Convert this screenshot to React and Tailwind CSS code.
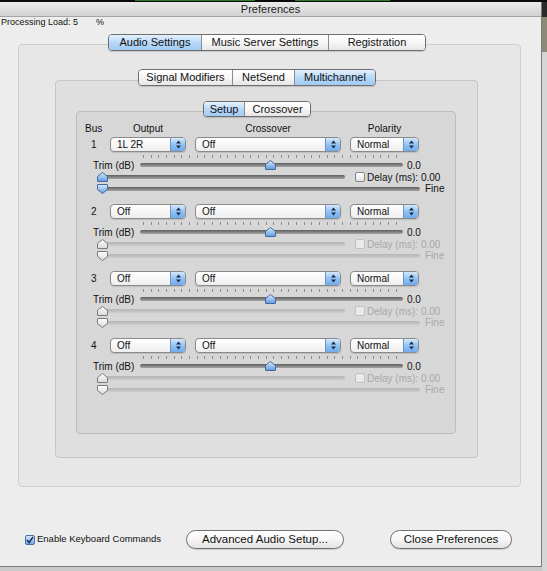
import React from 'react';

const TICKS = Array.from({ length: 34 });

function Segmented({ items, h }) {
    return (
        <div className={`flex w-fit ${h} rounded-[4px] border border-[#6e6e6e] overflow-hidden shadow-[0_1px_1px_rgba(0,0,0,0.15)] relative z-10`}>
            {items.map((it, i) => (
                <div
                    key={it.label}
                    className={`${it.w} flex items-center justify-center text-[11px] text-[#111] ${i > 0 ? 'border-l border-[#8c8c8c]' : ''} ${it.on ? 'bg-linear-to-b from-[#e4f1fd] via-[#b9d9f8] to-[#9fcbf3]' : 'bg-linear-to-b from-white via-[#f7f7f7] to-[#e6e6e6]'}`}
                >
                    {it.label}
                </div>
            ))}
        </div>
    );
}

function Arrows() {
    return (
        <svg width="7" height="9" viewBox="0 0 7 9">
            <path d="M3.5 0.5 L6 3.5 L1 3.5 Z" fill="#1c2b48" />
            <path d="M3.5 8.5 L6 5.5 L1 5.5 Z" fill="#1c2b48" />
        </svg>
    );
}

function Popup({ label, w }) {
    return (
        <div className={`flex h-[15px] ${w} rounded-[4px] border border-[#8a8a8a] overflow-hidden bg-linear-to-b from-white to-[#eeeeee] shadow-[0_1px_1px_rgba(0,0,0,0.12)]`}>
            <div className="flex-1 pl-[6px] text-[10px] leading-[13px] text-[#111]">{label}</div>
            <div className="w-[15px] flex items-center justify-center border-l border-[#6f93c6] bg-linear-to-b from-[#d6e9fc] via-[#93c3f2] to-[#6fabed]">
                <Arrows />
            </div>
        </div>
    );
}

function Thumb({ down, blue, pos }) {
    const fill = blue ? 'url(#thumbBlue)' : 'url(#thumbWhite)';
    const stroke = blue ? '#46679a' : '#7a7a7a';
    return (
        <svg width="11" height="10" viewBox="0 0 11 10" className={`absolute top-1/2 -translate-y-1/2 ${pos}`}>
            {down ? (
                <path d="M1 0.5 L10 0.5 Q10.5 0.5 10.5 1 L10.5 5.5 L5.5 9.5 L0.5 5.5 L0.5 1 Q0.5 0.5 1 0.5 Z" fill={fill} stroke={stroke} />
            ) : (
                <path d="M5.5 0.5 L10.5 4.5 L10.5 9 Q10.5 9.5 10 9.5 L1 9.5 Q0.5 9.5 0.5 9 L0.5 4.5 Z" fill={fill} stroke={stroke} />
            )}
        </svg>
    );
}

function Track({ cls, dim, children }) {
    return (
        <div className={`relative h-[4px] rounded-full ${cls} ${dim ? 'bg-linear-to-b from-[#b4b4b4] to-[#cdcdcd]' : 'bg-linear-to-b from-[#5f5f5f] to-[#a5a5a5]'}`}>
            {children}
        </div>
    );
}

function Check({ on, dim }) {
    return (
        <div className={`w-[10px] h-[10px] rounded-[2px] border flex items-center justify-center ${on ? 'border-[#4b6d9f] bg-linear-to-b from-[#d4e8fc] to-[#6ea9ec]' : dim ? 'border-[#c0c0c0] bg-[#eaeaea]' : 'border-[#858585] bg-linear-to-b from-white to-[#e2e2e2]'}`}>
            {on && (
                <svg width="8" height="8" viewBox="0 0 8 8">
                    <path d="M1 4 L3.2 6.5 L7 0.8" fill="none" stroke="#1a2a4a" strokeWidth="1.4" />
                </svg>
            )}
        </div>
    );
}

function Block({ n, output, first }) {
    const dim = !first;
    return (
        <div className="h-[67px] flex flex-col">
            <div className="flex items-center h-[15px]">
                <div className="w-[33px] pl-[14px] text-[10px] text-[#111]">{n}</div>
                <Popup w="w-[76px]" label={output} />
                <div className="w-[9px]" />
                <Popup w="w-[146px]" label="Off" />
                <div className="w-[9px]" />
                <Popup w="w-[69px]" label="Normal" />
            </div>
            <div className="mt-[3px] ml-[66px] w-[254px] h-[4px] flex justify-between">
                {TICKS.map((_, i) => (
                    <div key={i} className="w-px h-[3px] bg-[#8c8c8c]" />
                ))}
            </div>
            <div className="h-[12px] flex items-center text-[10px] text-[#111]">
                <span className="ml-[16px] w-[47px]">Trim (dB)</span>
                <Track cls="w-[263px]">
                    <Thumb blue pos="left-[125px]" />
                </Track>
                <span className="ml-[4px]">0.0</span>
            </div>
            <div className="h-[12px] flex items-center text-[10px]">
                <Track cls="ml-[25px] w-[243px]" dim={dim}>
                    <Thumb blue={first} pos="-left-[5px]" />
                </Track>
                <div className="ml-[10px]"><Check dim={dim} /></div>
                <span className={`ml-[2px] ${dim ? 'text-[#a9a9a9]' : 'text-[#111]'}`}>Delay (ms): 0.00</span>
            </div>
            <div className="h-[11px] flex items-center text-[10px]">
                <Track cls="ml-[25px] w-[318px]" dim={dim}>
                    <Thumb down blue={first} pos="-left-[5px]" />
                </Track>
                <span className={`ml-[5px] ${dim ? 'text-[#a9a9a9]' : 'text-[#111]'}`}>Fine</span>
            </div>
        </div>
    );
}

export default function App() {
    return (
        <div className="w-[547px] h-[571px] overflow-hidden flex flex-col bg-[#c9c9c9] font-['Liberation_Sans',Arial,sans-serif] select-none">
            <svg width="0" height="0" className="absolute">
                <defs>
                    <linearGradient id="thumbBlue" x1="0" y1="0" x2="0" y2="1">
                        <stop offset="0" stopColor="#dcecfd" />
                        <stop offset="1" stopColor="#5d9be3" />
                    </linearGradient>
                    <linearGradient id="thumbWhite" x1="0" y1="0" x2="0" y2="1">
                        <stop offset="0" stopColor="#ffffff" />
                        <stop offset="1" stopColor="#d9d9d9" />
                    </linearGradient>
                </defs>
            </svg>

            {/* desktop strip behind */}
            <div className="h-[2px] bg-[#0a0a0a] flex">
                <div className="ml-[135px] w-[120px] h-[1px] bg-[#2f7a2f]" />
                <div className="ml-[40px] w-[95px] h-[1px] bg-[#2f7a2f]" />
            </div>

            <div className="flex flex-1">
                {/* window */}
                <div className="w-[542px] h-[565px] flex flex-col bg-[#ededed] border-r border-b border-[#7a7a7a]">
                    <div className="h-[15px] flex items-center justify-center bg-linear-to-b from-[#ebebeb] to-[#d2d2d2] border-b border-[#a5a5a5] text-[11px] text-[#222]">
                        Preferences
                    </div>

                    <div className="h-[12px] flex items-center pl-[1px] text-[9px] text-[#111]">
                        <span>Processing Load: 5</span>
                        <span className="ml-[18px]">%</span>
                    </div>

                    {/* outer tabs */}
                    <div className="mt-[5px] ml-[108px]">
                        <Segmented
                            h="h-[17px]"
                            items={[
                                { label: 'Audio Settings', w: 'w-[92px]', on: true },
                                { label: 'Music Server Settings', w: 'w-[127px]' },
                                { label: 'Registration', w: 'w-[97px]' },
                            ]}
                        />
                    </div>
                    <div className="-mt-[7px] ml-[18px] w-[503px] h-[443px] rounded-[4px] border border-[#cfcfcf] bg-[#e7e7e7] pt-[24px] flex flex-col">
                        <div className="ml-[119px]">
                            <Segmented
                                h="h-[17px]"
                                items={[
                                    { label: 'Signal Modifiers', w: 'w-[93px]' },
                                    { label: 'NetSend', w: 'w-[62px]' },
                                    { label: 'Multichannel', w: 'w-[81px]', on: true },
                                ]}
                            />
                        </div>
                        <div className="-mt-[6px] ml-[36px] w-[423px] h-[378px] rounded-[4px] border border-[#c6c6c6] bg-[#dfdfdf] pt-[20px] flex flex-col">
                            <div className="ml-[147px]">
                                <Segmented
                                    h="h-[16px]"
                                    items={[
                                        { label: 'Setup', w: 'w-[40px]', on: true },
                                        { label: 'Crossover', w: 'w-[66px]' },
                                    ]}
                                />
                            </div>
                            <div className="-mt-[6px] ml-[20px] w-[380px] h-[323px] rounded-[4px] border border-[#bdbdbd] bg-[#d7d7d7] pt-[11px] flex flex-col">
                                <div className="h-[10px] flex items-center text-[10px] text-[#111]">
                                    <div className="w-[33px] pl-[8px]">Bus</div>
                                    <div className="w-[76px] text-center">Output</div>
                                    <div className="w-[9px]" />
                                    <div className="w-[146px] text-center">Crossover</div>
                                    <div className="w-[9px]" />
                                    <div className="w-[69px] text-center">Polarity</div>
                                </div>
                                <div className="mt-[4px] flex flex-col">
                                    <Block n="1" output="1L 2R" first />
                                    <Block n="2" output="Off" />
                                    <Block n="3" output="Off" />
                                    <Block n="4" output="Off" />
                                </div>
                            </div>
                        </div>
                    </div>

                    {/* bottom row */}
                    <div className="mt-[43px] h-[19px] flex items-center">
                        <div className="ml-[25px]"><Check on /></div>
                        <span className="ml-[2px] w-[149px] text-[9.5px] text-[#111]">Enable Keyboard Commands</span>
                        <div className="w-[158px] h-[19px] rounded-full border border-[#727272] bg-linear-to-b from-white via-[#f6f6f6] to-[#e2e2e2] flex items-center justify-center text-[11.5px] text-[#111] shadow-[0_1px_1px_rgba(0,0,0,0.15)]">
                            Advanced Audio Setup...
                        </div>
                        <div className="ml-[46px] w-[122px] h-[19px] rounded-full border border-[#727272] bg-linear-to-b from-white via-[#f6f6f6] to-[#e2e2e2] flex items-center justify-center text-[11.5px] text-[#111] shadow-[0_1px_1px_rgba(0,0,0,0.15)]">
                            Close Preferences
                        </div>
                    </div>
                </div>

                {/* desktop at right */}
                <div className="flex-1 flex flex-col">
                    <div className="h-[15px] bg-[#2a2a2a]" />
                    <div className="h-[35px] bg-[#8d8b78]" />
                    <div className="flex-1 bg-[#d5d5d5]" />
                </div>
            </div>
        </div>
    );
}
